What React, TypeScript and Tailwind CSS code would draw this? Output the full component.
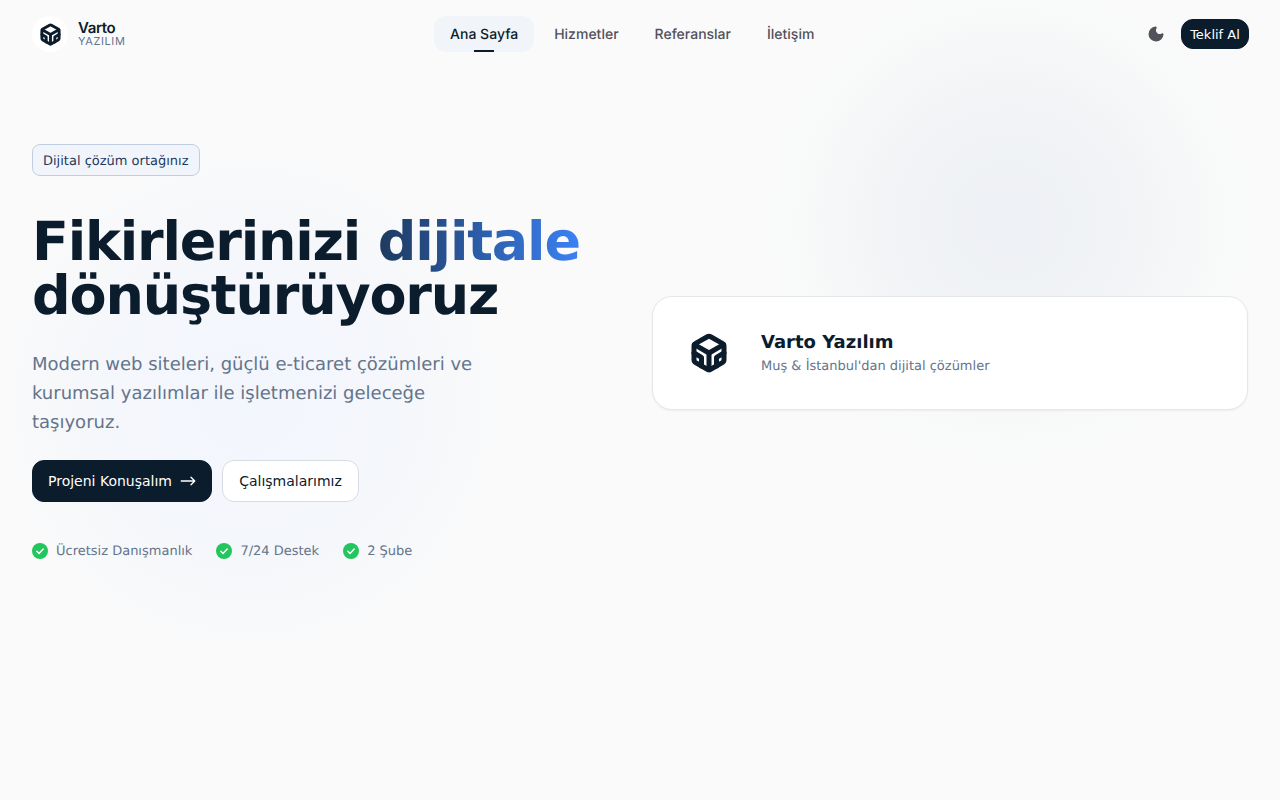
import { Moon } from "lucide-react"

const nav = ["Hizmetler", "Referanslar", "İletişim"]
const perks = ["Ücretsiz Danışmanlık", "7/24 Destek", "2 Şube"]

function VartoIcon({ size }: { size: number }) {
  return (
    <svg width={size} height={size} viewBox="0 0 24 24" fill="none" stroke="#0b1c2c" strokeWidth="3" strokeLinecap="round" strokeLinejoin="round">
      <path d="M21 16V8a2 2 0 0 0-1-1.73l-7-4a2 2 0 0 0-2 0l-7 4A2 2 0 0 0 3 8v8a2 2 0 0 0 1 1.73l7 4a2 2 0 0 0 2 0l7-4A2 2 0 0 0 21 16z" />
      <path d="M7.5 19.79V14.6L3 12" />
      <path d="M21 12l-4.5 2.6v5.19" />
      <path d="M3.27 6.96L12 12.01l8.73-5.05" />
      <path d="M12 22.08V12" />
    </svg>
  )
}

export default function App() {
  return (
    <div className="relative min-h-screen overflow-hidden bg-[#fafafa] font-['DejaVu_Sans',sans-serif] [text-rendering:geometricPrecision]">
      {/* soft glows */}
      <div className="absolute left-[740px] top-[-48px] h-[540px] w-[540px] rounded-full bg-[radial-gradient(circle,#eef1f5_0%,#f1f3f6_30%,#f8f9f9_55%,#fafafa_70%)]" />
      <div className="absolute left-[-20px] top-[130px] h-[540px] w-[540px] rounded-full bg-[radial-gradient(circle,#f2f6fd_0%,#f5f7fb_40%,#fafafa_70%)]" />

      <header className="relative flex h-[68px] items-center justify-between px-8">
        <div className="flex items-center gap-[10px]">
          <div className="flex h-9 w-9 items-center justify-center rounded-full bg-white">
            <VartoIcon size={23} />
          </div>
          <div className="font-['Inter',sans-serif]">
            <div className="text-[15px] leading-[14px] font-semibold tracking-tight text-[#0b1c2c]">Varto</div>
            <div className="text-[11px] leading-[12px] tracking-[0.6px] text-[#64748b]">YAZILIM</div>
          </div>
        </div>
        <nav className="-ml-2 flex items-center gap-1 font-['Inter',sans-serif] text-sm font-medium text-[#52525b]">
          <a className="relative rounded-xl bg-[#f1f5f9] px-4 pt-[10px] pb-2 leading-[18px] text-[#0b1c2c]">
            Ana Sayfa
            <span className="absolute bottom-0 left-10 h-0.5 w-5 bg-[#0b1c2c]" />
          </a>
          {nav.map((item) => (
            <a key={item} className="rounded-xl px-4 pt-[10px] pb-2 leading-[18px]">
              {item}
            </a>
          ))}
        </nav>
        <div className="-mr-px flex items-center gap-4">
          <Moon size={18} fill="#52525b" color="#52525b" />
          <button className="h-[30px] w-[68px] rounded-xl border border-[#0b1c2c] bg-[#0b1c2c] pt-px text-[13px] text-white">
            Teklif Al
          </button>
        </div>
      </header>

      <main className="relative grid grid-cols-2 items-center gap-6 px-8 pt-[76px]">
        <div>
          <span className="inline-block rounded-lg border border-[#c0cfe3] bg-[#f1f5fb] px-[10px] pt-[9px] pb-[5px] text-[13px] leading-4 text-[#1e3a5f]">
            Dijital çözüm ortağınız
          </span>
          <h1 className="mt-[39px] text-[54px] leading-[54px] font-bold tracking-[-0.022em] text-[#0b1c2c]">
            Fikirlerinizi{" "}
            <span className="bg-linear-to-r from-[#1e3a5f] to-[#3b82f6] bg-clip-text text-transparent">dijitale</span>
            <br />
            dönüştürüyoruz
          </h1>
          <p className="mt-[27px] max-w-[480px] text-lg leading-[29px] text-[#64748b]">
            Modern web siteleri, güçlü e-ticaret çözümleri ve kurumsal yazılımlar ile işletmenizi geleceğe taşıyoruz.
          </p>
          <div className="mt-[23px] flex items-center gap-[10px]">
            <button className="flex h-[42px] w-[180px] items-center justify-start gap-[7px] rounded-xl border border-[#0b1c2c] bg-[#0b1c2c] pl-[15px] text-sm text-white">
              Projeni Konuşalım
              <svg viewBox="0 0 24 24" className="h-[18px] w-[18px]" fill="none" stroke="currentColor" strokeWidth="1.8" strokeLinecap="round" strokeLinejoin="round">
                <path d="M3 12h18M16 7l5 5-5 5" />
              </svg>
            </button>
            <button className="h-[42px] w-[137px] rounded-xl border border-[#d9dce3] bg-white text-sm text-[#0b1c2c]">
              Çalışmalarımız
            </button>
          </div>
          <div className="mt-[41px] mb-[2px] flex items-center gap-6 text-[13px] leading-4 text-[#64748b]">
            {perks.map((perk) => (
              <div key={perk} className="flex items-center gap-2">
                <svg viewBox="0 0 16 16" className="h-4 w-4">
                  <circle cx="8" cy="8" r="8" fill="#22c55e" />
                  <path d="M4.8 8.2l2.2 2.2 4.2-4.4" fill="none" stroke="#fff" strokeWidth="1.5" strokeLinecap="round" strokeLinejoin="round" />
                </svg>
                <span className="translate-y-px">{perk}</span>
              </div>
            ))}
          </div>
        </div>
        <div className="flex h-[114px] items-center gap-[32px] rounded-[20px] border border-[#e5e7eb] bg-white px-[36px] shadow-xs">
          <VartoIcon size={40} />
          <div className="pt-[2px]">
            <div className="text-lg leading-6 font-bold text-[#0b1c2c]">Varto Yazılım</div>
            <div className="mt-[2px] text-[13px] text-[#64748b]">Muş &amp; İstanbul'dan dijital çözümler</div>
          </div>
        </div>
      </main>
    </div>
  )
}
